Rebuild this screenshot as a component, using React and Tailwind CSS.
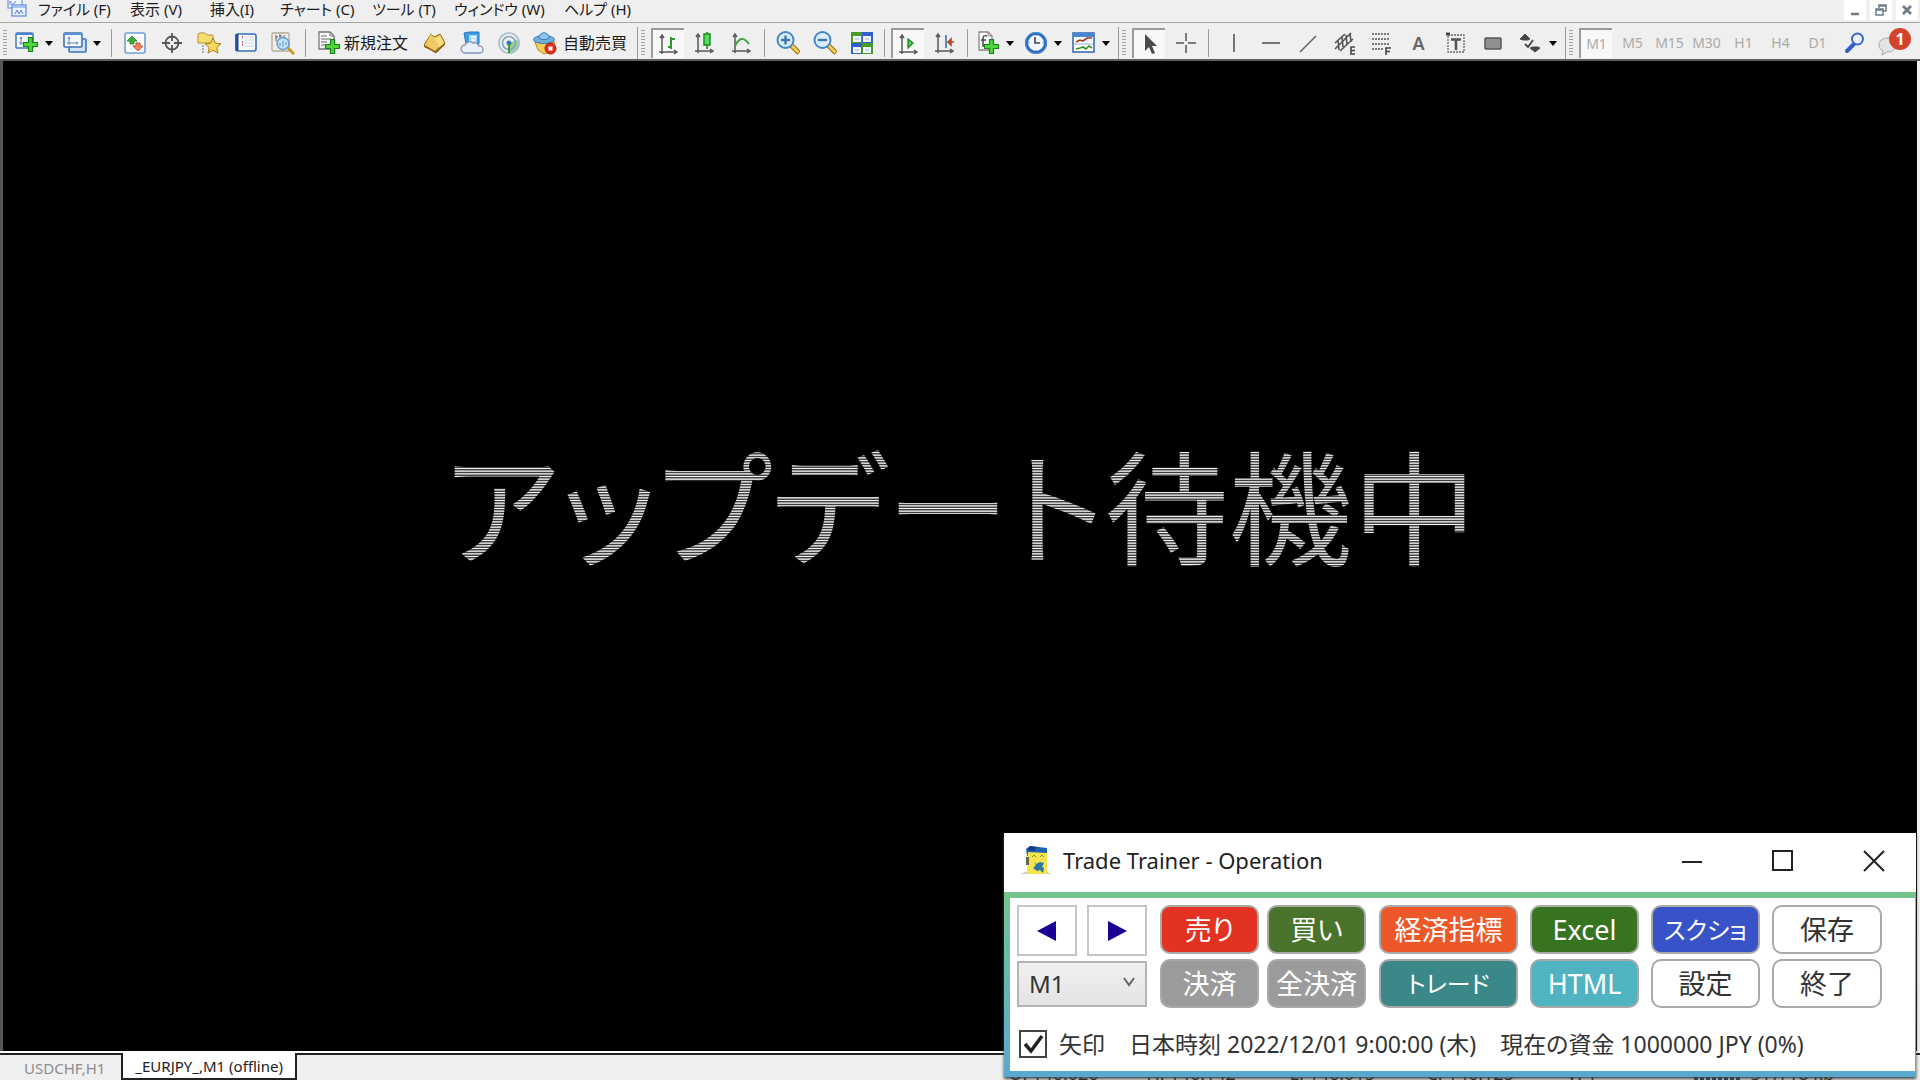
import React from "react";

const Svg = ({ children, w = 24, h = 24 }) => (
  <svg width={w} height={h} viewBox={`0 0 ${w} ${h}`} fill="none" aria-hidden="true" className="shrink-0">
    {children}
  </svg>
);

const Plus = ({ x = 8, y = 8 }) => (
  <path
    transform={`translate(${x} ${y})`}
    d="M5.5 .7h4v4.8h5v4h-5v5h-4v-5h-5v-4h5z"
    fill="#4fd63c"
    stroke="#17861a"
    strokeWidth="1.2"
  />
);

const MiniAxes = ({ x, y }) => (
  <path transform={`translate(${x} ${y})`} d="M2 0v8M0 6h11M1 2l1-2 1 2M9 5l2 1-2 1" stroke="#6d86a8" />
);

const Axes = () => (
  <path d="M5 4v18M2 20h17M3 6l2-3 2 3M17 18l3 2-3 2" stroke="#5a5a5a" strokeWidth="1.500" />
);

const NewChart = () => (
  <Svg>
    <rect x="1" y="2" width="17" height="15" rx="1" fill="#f4f9ff" stroke="#4a7ab8" strokeWidth="1.5" />
    <path d="M1 3h17" stroke="#4a86cf" strokeWidth="2" />
    <MiniAxes x={4} y={6} />
    <Plus x={8} y={6} />
  </Svg>
);
const Profiles = () => (
  <Svg>
    <rect x="6" y="8" width="17" height="13" rx="1" fill="#cfe3fa" stroke="#3f72b5" strokeWidth="1.6" />
    <rect x="1" y="2" width="18" height="14" rx="1" fill="#f4f9ff" stroke="#3f72b5" strokeWidth="1.6" />
    <path d="M1 3h18" stroke="#5b93d8" strokeWidth="2" />
    <MiniAxes x={4} y={6} />
  </Svg>
);
const MarketWatch = () => (
  <Svg>
    <rect x="2" y="2" width="20" height="20" rx="2" fill="#fff" stroke="#6f9fd6" strokeWidth="1.6" />
    <path d="M6 7h12M6 11h12M6 15h12M6 18h12" stroke="#e1e1e8" />
    <path d="M9 5l5 5h-3v3H7v-3H4z" fill="#3fae3a" stroke="#1d7d1c" strokeWidth=".8" />
    <path d="M15 20l-5-5h3v-3h4v3h3z" fill="#f4845c" stroke="#c1401a" strokeWidth=".8" />
  </Svg>
);
const Target = () => (
  <Svg>
    <circle cx="12" cy="12" r="6.5" stroke="#555" strokeWidth="1.8" />
    <path d="M12 2v8M12 14v8M2 12h8M14 12h8" stroke="#555" strokeWidth="1.8" />
  </Svg>
);
const FolderStar = () => (
  <Svg>
    <path d="M1 3l2-1h5l2 2h6v8H1z" fill="#f6dd72" stroke="#b9952c" />
    <path d="M6 14v8" stroke="#666" strokeDasharray="2 1" />
    <path
      d="M16 7l2.400 5.200 5.600.6-4.200 3.800 1.200 5.500-5-2.800-5 2.800 1.200-5.500L8 12.800l5.600-.6z"
      fill="#f8d75a"
      stroke="#a97d1a"
    />
  </Svg>
);
const Terminal = () => (
  <Svg>
    <rect x="2" y="3" width="20" height="17" rx="2" fill="#f6f9ff" stroke="#3a6fb5" strokeWidth="1.600" />
    <path d="M3 3v17" stroke="#1f4f93" strokeWidth="3" />
    <path d="M8 6h1M8 11h1M8 14h1" stroke="#d22" strokeWidth="1.500" />
    <path d="M11 6h9M11 9h9M11 12h9M11 15h9" stroke="#d3dae8" />
  </Svg>
);
const Tester = () => (
  <Svg>
    <rect x="1" y="2" width="17" height="18" rx="1" fill="#f1efe9" stroke="#b4aa98" strokeWidth="1.300" />
    <path d="M5 4v6M9 3v6M13 4v6M4 6h3M8 5h3M12 7h3" stroke="#666" />
    <path d="M17 17l6 6" stroke="#c79a28" strokeWidth="3" />
    <circle cx="12" cy="12.500" r="6" fill="#bfe0f8" fillOpacity=".9" stroke="#6b9ccb" strokeWidth="1.500" />
    <path d="M9 15v-3M12 16v-6M15 14v-3" stroke="#5f91bd" />
  </Svg>
);
const Order = () => (
  <Svg>
    <path d="M1 1h11l4 4v13H1z" fill="#fff" stroke="#777" strokeWidth="1.300" />
    <path d="M12 1v4h4" stroke="#777" />
    <path d="M3 5h6M3 8h10M3 11h6M3 14h5" stroke="#999" strokeWidth="1.500" />
    <Plus x={7} y={8} />
  </Svg>
);
const Gold = () => (
  <Svg>
    <path d="M1 14L8 3l3 3 6-3 5 9-9 10z" fill="#d8a93c" stroke="#94691a" />
    <path d="M8 3c1 4 4 5 9 1l4 8c-3 4-6 5-9 4z" fill="#f8dc83" />
    <path d="M8 3L2 14l10 6 4-6z" fill="#f0cb62" />
    <path d="M1 14l11 6 10-8v2l-9 8L1 16z" fill="#8f6318" />
  </Svg>
);
const Cloud = () => (
  <Svg>
    <path d="M4 2l5-1h10v12H6z" fill="#3f9de8" stroke="#2979c0" />
    <path d="M9 4h8v9H9z" fill="#a9dbff" />
    <path d="M11 6h5M11 9h4" stroke="#fff" strokeWidth="1.500" />
    <path
      d="M5 22a4 4 0 010-8 5 5 0 018-2 5 5 0 016 3 3.500 3.500 0 011 7z"
      fill="#eaf0f8"
      stroke="#8496b4"
      strokeWidth="1.300"
    />
  </Svg>
);
const Radio = () => (
  <Svg>
    <path d="M12 12v11a11 11 0 0010-15z" fill="#7cc46e" opacity=".75" />
    <circle cx="12" cy="12" r="10" stroke="#a9bfd0" strokeWidth="1.600" />
    <circle cx="12" cy="12" r="6.500" stroke="#7fa6c4" strokeWidth="1.600" />
    <circle cx="12" cy="12" r="2.500" fill="#3c78b4" />
    <path d="M12 13v9" stroke="#3c9c3c" strokeWidth="2" />
  </Svg>
);
const Expert = () => (
  <Svg>
    <path d="M2 11h20l-5 10-6 2-6-4z" fill="#f3cf5a" stroke="#b38a24" />
    <ellipse cx="11" cy="8.500" rx="10.500" ry="4" fill="#6fb0dc" stroke="#3b7cae" />
    <path d="M6 7c0-7 10-7 10 0 0 2-10 2-10 0z" fill="#8cc6ea" stroke="#3b7cae" />
    <circle cx="17.500" cy="17.500" r="5.500" fill="#e0301c" stroke="#a81c0c" />
    <rect x="15.500" y="15.500" width="4" height="4" fill="#fff" />
  </Svg>
);
const Bars = () => (
  <Svg>
    <Axes />
    <path d="M14 5v12M11 15h3M14 7h4" stroke="#2f9a2c" strokeWidth="2" />
  </Svg>
);
const Candle = () => (
  <Svg>
    <Axes />
    <path d="M14 1v17" stroke="#1f8a22" strokeWidth="1.600" />
    <rect x="11" y="3" width="6" height="11" fill="#4fe060" stroke="#1f8a22" strokeWidth="1.500" />
  </Svg>
);
const LineChart = () => (
  <Svg>
    <Axes />
    <path d="M5 15c4-8 8-10 14-2" stroke="#3ba238" strokeWidth="1.800" />
  </Svg>
);
const Zoom = ({ plus }) => (
  <Svg>
    <path d="M15 14l8 8" stroke="#8f6a14" strokeWidth="5" />
    <path d="M15 14l7.500 7.500" stroke="#f1cf57" strokeWidth="3" />
    <circle cx="9.500" cy="9" r="8" fill="#d7efff" stroke="#4a86cc" strokeWidth="2" />
    <path d={plus ? "M5 9h9M9.500 4.500v9" : "M5 9h9"} stroke="#3d79a8" strokeWidth="2.400" />
  </Svg>
);
const Tiles = () => (
  <Svg>
    <rect x="1" y="1" width="11" height="11" fill="#4c9a26" />
    <rect x="12" y="1" width="11" height="11" fill="#3260cf" />
    <rect x="1" y="12" width="11" height="11" fill="#3260cf" />
    <rect x="12" y="12" width="11" height="11" fill="#4c9a26" />
    <path d="M3 5h8v6H3zM13 5h8v6h-8zM3 16h8v6H3zM13 16h8v6h-8z" fill="#f2f7ff" />
    <path d="M5 8h4M15 8h4M5 19h4M15 19h4" stroke="#9fb3d8" />
  </Svg>
);
const AutoScroll = () => (
  <Svg>
    <Axes />
    <path d="M11 7l5 4-5 5z" fill="#55c45a" stroke="#1f8a22" strokeWidth="1.300" />
  </Svg>
);
const Shift = () => (
  <Svg>
    <Axes />
    <path d="M13 4v13" stroke="#4a83b0" strokeWidth="1.800" />
    <path d="M21 11h-5M18 8l-3 3 3 3z" stroke="#b8461e" fill="#b8461e" strokeWidth="1.600" />
  </Svg>
);
const Indicator = () => (
  <Svg>
    <path d="M3 1h9l4 4v14H3z" fill="#fff" stroke="#888" strokeWidth="1.300" />
    <path d="M12 1v4h4" stroke="#888" />
    <path d="M11 5c-3-1-4 0-4 3v8M5 9h5" stroke="#444" strokeWidth="1.500" />
    <Plus x={8} y={8} />
  </Svg>
);
const Clock = () => (
  <Svg>
    <circle cx="12" cy="12" r="9.500" fill="#f3f8fe" stroke="#2a69bd" strokeWidth="3.200" />
    <circle cx="12" cy="12" r="10.500" stroke="#4f93e0" strokeWidth="1" />
    <path d="M11 6v6h5" stroke="#444" strokeWidth="1.600" />
    <path d="M12 4v1M12 19v1M4.500 12h1M18.500 12h1" stroke="#888" />
  </Svg>
);
const Template = () => (
  <Svg>
    <rect x="1" y="2" width="21" height="19" fill="#fff" stroke="#3a6fb5" strokeWidth="1.600" />
    <path d="M1 4h21" stroke="#4a86cf" strokeWidth="4" />
    <path d="M2 13h19" stroke="#8fb0dc" />
    <path d="M4 11l4-2 3 1 4-3h5" stroke="#a2361c" strokeWidth="1.600" />
    <path d="M4 18l4-1 3-1 3 2 3-3 3 2" stroke="#35922c" strokeWidth="1.600" />
  </Svg>
);
const Cursor = () => (
  <Svg>
    <path d="M7 2v17l4-4 3 7 3-1-3-7h5z" fill="#4b4b4b" />
  </Svg>
);
const Cross = () => (
  <Svg>
    <path d="M12 2v8M12 14v8M2 12h8M14 12h8" stroke="#555" strokeWidth="1.500" />
  </Svg>
);
const VLine = () => (
  <Svg>
    <path d="M12 3v18" stroke="#555" strokeWidth="1.600" />
  </Svg>
);
const HLine = () => (
  <Svg>
    <path d="M3 12h18" stroke="#555" strokeWidth="1.600" />
  </Svg>
);
const Trend = () => (
  <Svg>
    <path d="M4 21L20 5" stroke="#666" strokeWidth="1.600" />
  </Svg>
);
const Channel = () => (
  <Svg>
    <path d="M2 12L12 3M2 18L18 2M7 20L20 8M5 9l1 10M9 6l1 10M13 4l1 9M17 2l1 9" stroke="#555" strokeWidth="1.600" />
    <path d="M22 16h-4v7h4M18 19.500h4" stroke="#444" strokeWidth="1.600" />
  </Svg>
);
const Fibo = () => (
  <Svg>
    <path d="M2 3h18M2 8h18M2 13h18M2 18h11" stroke="#555" strokeWidth="1.600" strokeDasharray="2 1" />
    <path d="M16 24v-7h5M16 20.500h4" stroke="#444" strokeWidth="1.600" />
  </Svg>
);
const TextBox = () => (
  <Svg>
    <rect x="4" y="4" width="16" height="17" stroke="#666" strokeWidth="1.300" strokeDasharray="2 1" />
    <path d="M2 3h4" stroke="#444" strokeWidth="3" />
    <path d="M7 8.500h10M12 8v11" stroke="#555" strokeWidth="2.600" />
  </Svg>
);
const Box = () => (
  <Svg>
    <rect x="4" y="7" width="16" height="11" rx="1" fill="#909090" stroke="#555" strokeWidth="1.500" />
  </Svg>
);
const Shapes = () => (
  <Svg>
    <path d="M6 3l5 5-2 1H4L1 8zM16 21l5-4-2-1h-5l-3 1z" fill="#484848" stroke="#484848" />
    <path d="M6 13l3 3 5-7" stroke="#484848" strokeWidth="1.800" />
  </Svg>
);
const Search = () => (
  <Svg>
    <path d="M11 13l-7 7" stroke="#2f5fc9" strokeWidth="4" strokeLinecap="round" />
    <circle cx="14.500" cy="8" r="5.500" fill="#eef4ff" stroke="#3768d0" strokeWidth="2" />
  </Svg>
);
const Bubble = () => (
  <Svg w={32} h={30}>
    <path d="M13 10c-6 0-9 3-9 7 0 3 2 5 4 6l-1 4 5-3c6 0 9-3 9-7s-3-7-8-7z" fill="#e4e4e6" stroke="#a9a9ae" />
  </Svg>
);

const Arrow = () => (
  <svg width="8" height="5" viewBox="0 0 8 5" aria-hidden="true" className="ml-1.5">
    <path d="M0 0h8L4 5z" fill="#000" />
  </svg>
);

const Sep = () => <span className="mx-1 h-7 w-px shrink-0 bg-[#9b9b9b]" />;
const Grip = () => (
  <span className="ml-[3px] mr-1 h-[26px] w-1 shrink-0 bg-[repeating-linear-gradient(#a2a2a2_0_1px,#efefef_1px_3px)]" />
);
const Tool = ({ label, on, children }) => (
  <div className="flex w-[37px] shrink-0 justify-center">
    <button
      aria-label={label}
      className={
        on
          ? "flex h-[30px] w-[33px] items-center justify-center border-l-2 border-t-2 border-[#9a9a9a] bg-[#f8f8f8] text-[#aaa]"
          : "flex h-[30px] w-[33px] items-center justify-center text-[#aaa]"
      }
    >
      {children}
    </button>
  </div>
);
const Drop = ({ label, children }) => (
  <button aria-label={label} className="flex w-12 shrink-0 items-center pl-1">
    {children}
    <Arrow />
  </button>
);
const Group = ({ children }) => (
  <div className="flex h-8 shrink-0 items-center border-r border-[#9a9a9a] pr-0.5">{children}</div>
);

const menus = [
  ["ファイル (F)", "w-[92px]"],
  ["表示 (V)", "w-[80px]"],
  ["挿入(I)", "w-[70px]"],
  ["チャート (C)", "w-[92px]"],
  ["ツール (T)", "w-[82px]"],
  ["ウィンドウ (W)", "w-[110px]"],
  ["ヘルプ (H)", "w-[80px]"],
];
const frames = ["M1", "M5", "M15", "M30", "H1", "H4", "D1"];

const MenuBar = () => (
  <header className="flex h-[23px] items-start border-b border-[#a5a5a5] pl-[7px]">
    <svg width="20" height="18" viewBox="0 0 20 18" fill="none" aria-hidden="true">
      <rect x="1" y="-3" width="14" height="11" fill="#eef4ff" stroke="#7d9fe0" strokeWidth="1.300" />
      <path d="M3 5V1l3 4 3-4" stroke="#6c8fd8" />
      <rect x="5" y="5" width="14" height="11" fill="#eef4ff" stroke="#6c90dc" strokeWidth="1.300" />
      <path d="M5 7h14" stroke="#6c90dc" />
      <path d="M8 14l2-4 2 4 2-4 2 4" stroke="#5a7fd0" />
    </svg>
    <nav className="ml-[11px] flex text-[15px] leading-[18px] text-[#1c1c1c]">
      {menus.map(([t, w]) => (
        <button key={t} className={`${w} whitespace-nowrap text-left`}>
          {t}
        </button>
      ))}
    </nav>
    <div className="ml-auto flex gap-1 pr-0.5">
      <button aria-label="最小化" className="flex h-5 w-[22px] items-center justify-center bg-white">
        <Svg w={14} h={14}><path d="M3 11h8" stroke="#6d7b88" strokeWidth="2.500" /></Svg>
      </button>
      <button aria-label="元に戻す" className="flex h-5 w-[22px] items-center justify-center bg-white">
        <Svg w={14} h={14}><path d="M5 5V2h7v6H9M5 3h7M2 6h7v6H2zM2 7h7" stroke="#6d7b88" strokeWidth="1.500" /></Svg>
      </button>
      <button aria-label="閉じる" className="flex h-5 w-[22px] items-center justify-center bg-white">
        <Svg w={14} h={14}><path d="M3 3l8 8M11 3l-8 8" stroke="#6d7b88" strokeWidth="2.600" /></Svg>
      </button>
    </div>
  </header>
);

const Toolbar = () => (
  <div className="flex h-[38px] items-center border-b-2 border-[#5e5e5e] pt-1">
    <Group>
      <Grip />
      <Drop label="新規チャート"><NewChart /></Drop>
      <Drop label="プロファイル"><Profiles /></Drop>
      <Sep />
      <Tool label="気配値"><MarketWatch /></Tool>
      <Tool label="データウィンドウ"><Target /></Tool>
      <Tool label="ナビゲーター"><FolderStar /></Tool>
      <Tool label="ターミナル"><Terminal /></Tool>
      <Tool label="テスター"><Tester /></Tool>
      <Sep />
      <button className="ml-2 flex w-[98px] items-center gap-0.5 text-base leading-5">
        <Order />
        <span className="whitespace-nowrap">新規注文</span>
      </button>
      <Tool label="メタエディター"><Gold /></Tool>
      <Tool label="クラウド"><Cloud /></Tool>
      <Tool label="シグナル"><Radio /></Tool>
      <button className="flex w-[108px] items-center gap-1.5 pl-1.5 text-base leading-5">
        <Expert />
        <span className="whitespace-nowrap">自動売買</span>
      </button>
    </Group>
    <Group>
      <Grip />
      <Tool label="バーチャート" on><Bars /></Tool>
      <Tool label="ローソク足"><Candle /></Tool>
      <Tool label="ラインチャート"><LineChart /></Tool>
      <Sep />
      <Tool label="拡大"><Zoom plus /></Tool>
      <Tool label="縮小"><Zoom /></Tool>
      <Tool label="整列"><Tiles /></Tool>
      <Sep />
      <Tool label="自動スクロール" on><AutoScroll /></Tool>
      <Tool label="チャートシフト"><Shift /></Tool>
      <Sep />
      <Drop label="インディケータ"><Indicator /></Drop>
      <Drop label="時間足"><Clock /></Drop>
      <Drop label="定型チャート"><Template /></Drop>
    </Group>
    <Group>
      <Grip />
      <Tool label="カーソル" on><Cursor /></Tool>
      <Tool label="十字カーソル"><Cross /></Tool>
      <Sep />
      <div className="ml-0.5 flex gap-1">
        <div className="flex items-center">
          <Tool label="垂直線"><VLine /></Tool>
          <Tool label="水平線"><HLine /></Tool>
          <Tool label="トレンドライン"><Trend /></Tool>
          <Tool label="等距離チャネル"><Channel /></Tool>
          <Tool label="フィボナッチ"><Fibo /></Tool>
          <Tool label="テキスト">
            <span className="text-lg font-semibold leading-5 text-[#666]">A</span>
          </Tool>
          <Tool label="テキストラベル"><TextBox /></Tool>
          <Tool label="四角形"><Box /></Tool>
        </div>
        <Drop label="図形"><Shapes /></Drop>
      </div>
    </Group>
    <Grip />
    {frames.map((f) => (
      <Tool key={f} label={f} on={f === "M1"}>
        <span className="text-sm leading-5">{f}</span>
      </Tool>
    ))}
    <Tool label="検索"><Search /></Tool>
    <button aria-label="通知" className="relative ml-0.5 h-[30px] w-9">
      <Bubble />
      <span className="absolute right-0 top-0 flex size-[22px] items-center justify-center rounded-full bg-[#d5422b] text-base font-bold text-white">
        1
      </span>
    </button>
  </div>
);

const pill = "h-[49px] rounded-[10px] border-2 border-[#a9a9a9] whitespace-nowrap leading-8";

const Dialog = () => (
  <section className="absolute bottom-[3px] right-1 bg-white shadow-[0_2px_3px_#444]">
    <div className="flex h-[59px] items-center pb-1 pl-4">
      <svg width="32" height="30" viewBox="0 0 32 30" aria-hidden="true">
        <path d="M0 28l8-3h18l5 3z" fill="#ccc" />
        <path d="M6 3l4-3 17 2v7l-20 1z" fill="#1d62ac" />
        <path d="M10 0l7 1-3 4-7-1z" fill="#163b86" />
        <path d="M8 6l19 1v21H7z" fill="#f6e44e" />
        <path d="M6 11h3v8H6z" fill="#5b6c50" />
        <path d="M13 15l3 3 4-2 4 1-2 4 2 1-1 5-3-3-3 1-4-3 3-3z" fill="#2c75a8" />
        <path d="M12 11l2-2 2 2M20 11l2-2 2 2" stroke="#7b8c3c" fill="none" />
      </svg>
      <h1 className="ml-[11px] text-[22px] text-[#222]">Trade Trainer - Operation</h1>
      <div className="ml-auto mr-[30px] flex gap-[67px]">
        <button aria-label="最小化"><Svg><path d="M2 13h20" stroke="#222" strokeWidth="2" /></Svg></button>
        <button aria-label="最大化"><Svg><rect x="2" y="2" width="19" height="19" stroke="#222" strokeWidth="2" /></Svg></button>
        <button aria-label="閉じる"><Svg><path d="M2 2l20 20M22 2L2 22" stroke="#222" strokeWidth="2" /></Svg></button>
      </div>
    </div>
    <div className="bg-linear-to-b from-[#74c58c] to-[#58a8d0] py-1.5 pl-1.5 pr-px">
      <div className="bg-white pb-[11px] pl-[7px] pr-[33px] pt-[7px] text-[#333]">
        <div className="flex gap-[13px]">
          <div className="flex w-[130px] flex-col gap-[5px]">
            <div className="flex justify-between">
              <button aria-label="戻る" className="flex h-[51px] w-[60px] items-center justify-center border-2 border-[#c6c6c6] bg-white">
                <Svg w={20} h={22}><path d="M19 1v20L0 11z" fill="#1c0096" /></Svg>
              </button>
              <button aria-label="進む" className="flex h-[51px] w-[60px] items-center justify-center border-2 border-[#c6c6c6] bg-white">
                <Svg w={20} h={22}><path d="M1 1v20l19-10z" fill="#1c0096" /></Svg>
              </button>
            </div>
            <div className="relative">
              <select aria-label="時間足" className="h-[46px] w-full appearance-none border-2 border-[#b4b4b4] bg-linear-to-b from-[#f0f0f0] to-[#e4e4e4] pl-2.5 text-2xl leading-8">
                <option>M1</option>
              </select>
              <svg width="12" height="10" viewBox="0 0 12 10" fill="none" aria-hidden="true" className="pointer-events-none absolute right-3 top-4">
                <path d="M1 1l5 7 5-7" stroke="#666" strokeWidth="2" />
              </svg>
            </div>
          </div>
          <div className="grid grid-cols-[99px_99px] gap-x-2 gap-y-[5px] text-[27px]">
            <button className={`${pill} bg-[#e33122] text-white`}>売り</button>
            <button className={`${pill} bg-[#4a732b] text-white`}>買い</button>
            <button className={`${pill} bg-[#9b9b9b] text-white`}>決済</button>
            <button className={`${pill} bg-[#9b9b9b] text-white`}>全決済</button>
          </div>
          <div className="grid grid-cols-[139px_109px_109px_110px] gap-x-3 gap-y-[5px] text-[27px]">
            <button className={`${pill} bg-[#ed5829] text-white`}>経済指標</button>
            <button className={`${pill} bg-[#36741f] text-white`}>Excel</button>
            <button className={`${pill} bg-[#3853c8] text-2xl text-white`}>スクショ</button>
            <button className={`${pill} bg-white`}>保存</button>
            <button className={`${pill} bg-[#3b8889] text-2xl text-white`}>トレード</button>
            <button className={`${pill} bg-[#50b3c1] text-white`}>HTML</button>
            <button className={`${pill} bg-white`}>設定</button>
            <button className={`${pill} bg-white`}>終了</button>
          </div>
        </div>
        <div className="mt-5 flex items-center whitespace-nowrap pl-0.5 text-[23px] leading-8">
          <label className="flex items-center gap-3">
            <span className="relative flex size-7">
              <input type="checkbox" defaultChecked className="size-full appearance-none border-2 border-[#444] bg-white" />
              <svg width="28" height="28" viewBox="0 0 28 28" fill="none" aria-hidden="true" className="pointer-events-none absolute left-0 top-0">
                <path d="M6 14l6 7L23 6" stroke="#222" strokeWidth="3.500" />
              </svg>
            </span>
            矢印
          </label>
          <span className="ml-6">日本時刻 2022/12/01 9:00:00 (木)</span>
          <span className="ml-6">現在の資金 1000000 JPY (0%)</span>
        </div>
      </div>
    </div>
  </section>
);

const status = [
  ["O: 146.026", "w-[138px]"],
  ["H: 146.142", "w-[143px]"],
  ["L: 146.015", "w-[137px]"],
  ["C: 146.125", "w-[140px]"],
  ["V: 1", "w-[128px]"],
];

const Footer = () => (
  <footer className="flex h-[29px] items-stretch overflow-hidden border-t-2 border-white text-[15px] leading-6">
    <button className="border-t-2 border-[#222] pl-6 pr-4 text-[#8c8c8c]">USDCHF,H1</button>
    <button className="border-2 border-t-0 border-[#222] bg-white px-3 text-[#222]">_EURJPY_,M1 (offline)</button>
    <div className="flex grow justify-end border-t-2 border-[#222] pr-[86px] text-lg leading-9 text-[#222]">
      {status.map(([t, w]) => (
        <span key={t} className={w}>{t}</span>
      ))}
      <span className="mr-2.5 h-full w-[46px] bg-[repeating-linear-gradient(90deg,#1f3f66_0_4px,#efefef_4px_6px)]" />
      <span>317/18 kb</span>
    </div>
  </footer>
);

export default function App() {
  return (
    <div className="relative flex h-screen flex-col overflow-hidden bg-[#efefef] font-['Noto_Sans','Noto_Sans_CJK_JP',sans-serif] text-[#1c1c1c] [font-feature-settings:'palt']">
      <MenuBar />
      <Toolbar />
      <main className="mr-[3px] flex grow items-center justify-center border-l-[3px] border-[#555] bg-black pb-24">
        <p className="whitespace-nowrap bg-[repeating-linear-gradient(#f0f0f0_0_1px,#444_1px_2px,#9a9a9a_2px_3px,#d0d0d0_3px_4px,#3c3c3c_4px_5px,#d0d0d0_5px_6px,#9a9a9a_6px_7px,#444_7px_8px)] bg-clip-text text-[124px] leading-[160px] text-transparent">
          アップデート待機中
        </p>
      </main>
      <Footer />
      <Dialog />
    </div>
  );
}
